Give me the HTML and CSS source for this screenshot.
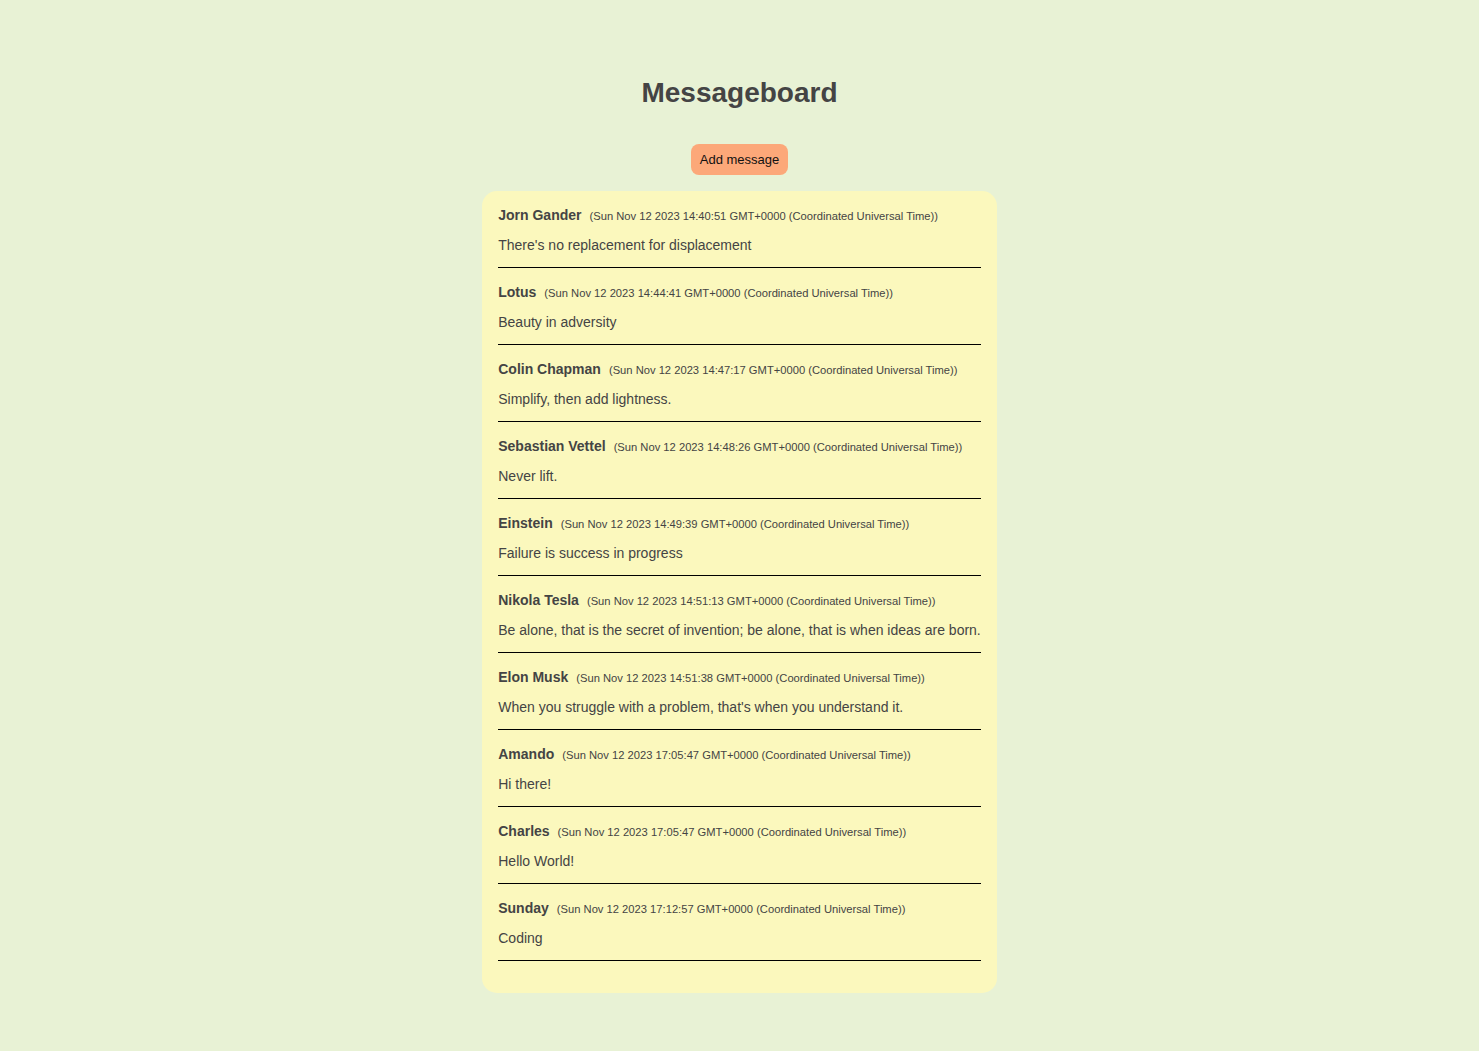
FILE: index.html
```html
<!DOCTYPE html>
<html lang="en">
<head>
<meta charset="utf-8">
<title>Messageboard</title>
<link rel="stylesheet" href="styles.css">
</head>
<body>
<main class="page">
  <h1 class="title">Messageboard</h1>
  <button class="add-btn" type="button">Add message</button>
  <section class="board">
    <article class="msg">
      <div class="msg-head"><span class="msg-name">Jorn Gander</span><span class="msg-date">(Sun Nov 12 2023 14:40:51 GMT+0000 (Coordinated Universal Time))</span></div>
      <p class="msg-text">There's no replacement for displacement</p>
    </article>
    <article class="msg">
      <div class="msg-head"><span class="msg-name">Lotus</span><span class="msg-date">(Sun Nov 12 2023 14:44:41 GMT+0000 (Coordinated Universal Time))</span></div>
      <p class="msg-text">Beauty in adversity</p>
    </article>
    <article class="msg">
      <div class="msg-head"><span class="msg-name">Colin Chapman</span><span class="msg-date">(Sun Nov 12 2023 14:47:17 GMT+0000 (Coordinated Universal Time))</span></div>
      <p class="msg-text">Simplify, then add lightness.</p>
    </article>
    <article class="msg">
      <div class="msg-head"><span class="msg-name">Sebastian Vettel</span><span class="msg-date">(Sun Nov 12 2023 14:48:26 GMT+0000 (Coordinated Universal Time))</span></div>
      <p class="msg-text">Never lift.</p>
    </article>
    <article class="msg">
      <div class="msg-head"><span class="msg-name">Einstein</span><span class="msg-date">(Sun Nov 12 2023 14:49:39 GMT+0000 (Coordinated Universal Time))</span></div>
      <p class="msg-text">Failure is success in progress</p>
    </article>
    <article class="msg">
      <div class="msg-head"><span class="msg-name">Nikola Tesla</span><span class="msg-date">(Sun Nov 12 2023 14:51:13 GMT+0000 (Coordinated Universal Time))</span></div>
      <p class="msg-text">Be alone, that is the secret of invention; be alone, that is when ideas are born.</p>
    </article>
    <article class="msg">
      <div class="msg-head"><span class="msg-name">Elon Musk</span><span class="msg-date">(Sun Nov 12 2023 14:51:38 GMT+0000 (Coordinated Universal Time))</span></div>
      <p class="msg-text">When you struggle with a problem, that's when you understand it.</p>
    </article>
    <article class="msg">
      <div class="msg-head"><span class="msg-name">Amando</span><span class="msg-date">(Sun Nov 12 2023 17:05:47 GMT+0000 (Coordinated Universal Time))</span></div>
      <p class="msg-text">Hi there!</p>
    </article>
    <article class="msg">
      <div class="msg-head"><span class="msg-name">Charles</span><span class="msg-date">(Sun Nov 12 2023 17:05:47 GMT+0000 (Coordinated Universal Time))</span></div>
      <p class="msg-text">Hello World!</p>
    </article>
    <article class="msg">
      <div class="msg-head"><span class="msg-name">Sunday</span><span class="msg-date">(Sun Nov 12 2023 17:12:57 GMT+0000 (Coordinated Universal Time))</span></div>
      <p class="msg-text">Coding</p>
    </article>
  </section>
</main>
</body>
</html>
```

FILE: styles.css
```css
html, body {
  margin: 0;
  padding: 0;
}

body {
  background: #e8f2d5;
  color: #444444;
  font-family: "Liberation Sans", Arial, sans-serif;
  min-height: 1051px;
}

.page {
  display: flex;
  flex-direction: column;
  align-items: center;
  padding-top: 77px;
  padding-bottom: 40px;
}

.title {
  margin: 0;
  font-size: 28px;
  line-height: 32px;
  font-weight: bold;
  color: #444444;
}

.add-btn {
  margin-top: 35px;
  height: 31px;
  padding: 0 9px;
  border: none;
  border-radius: 8px;
  background: #fca879;
  color: #111111;
  font-family: "Liberation Sans", Arial, sans-serif;
  font-size: 13px;
  line-height: 15px;
  cursor: pointer;
}

.board {
  margin-top: 16px;
  background: #fbf8bd;
  border-radius: 15px;
  padding: 16px 16px 16px 16px;
}

.msg {
  border-bottom: 1px solid #000000;
  padding-bottom: 14px;
  margin-bottom: 16px;
}

.msg-head {
  display: flex;
  align-items: baseline;
  height: 16px;
  line-height: 16px;
  margin-bottom: 14px;
  white-space: nowrap;
}

.msg-name {
  font-size: 14px;
  font-weight: bold;
}

.msg-date {
  font-size: 11.2px;
  margin-left: 8px;
}

.msg-text {
  margin: 0;
  font-size: 14px;
  line-height: 16px;
  white-space: nowrap;
}
```
